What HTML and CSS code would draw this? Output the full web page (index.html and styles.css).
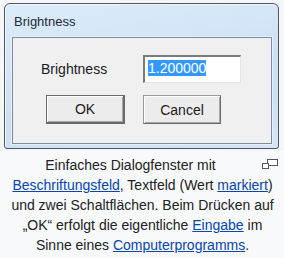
FILE: index.html
```html
<!DOCTYPE html>
<html lang="de">
<head>
    <meta charset="UTF-8">
    <title>Dialogfenster</title>
    <link rel="stylesheet" href="styles.css">
</head>
<body>
    <div class="thumb">
        <div class="shot">
            <div class="window">
                <div class="titlebar">Brightness</div>
                <div class="client">
                    <div class="field-row">
                        <span class="label">Brightness</span>
                        <div class="textbox"><span class="selected">1.200000</span></div>
                    </div>
                    <div class="button-row">
                        <div class="button default">OK</div>
                        <div class="button">Cancel</div>
                    </div>
                </div>
            </div>
        </div>
        <div class="caption">
            <span class="magnify">
                <svg width="16" height="10" viewBox="0 0 16 10">
                    <rect x="5.5" y="0.5" width="10" height="6" fill="#fff" stroke="#54595d"/>
                    <rect x="0.5" y="4.5" width="6" height="5" fill="#fff" stroke="#54595d"/>
                </svg>
            </span>
            Einfaches Dialogfenster mit <a href="#">Beschriftungsfeld</a>, Textfeld (Wert <a href="#">markiert</a>) und zwei Schaltflächen. Beim Drücken auf „OK“ erfolgt die eigentliche <a href="#">Eingabe</a> im Sinne eines <a href="#">Computerprogramms</a>.
        </div>
    </div>
</body>
</html>
```

FILE: styles.css
```css
body {
    margin: 0;
    background-color: #f8f9fa;
    font-family: 'Liberation Sans', Arial, sans-serif;
}
.thumb {
    width: 284px;
    height: 258px;
    overflow: hidden;
}
.shot {
    padding: 3px 0 0 4px;
    height: 148px;
    background-color: #f4f6f8;
}
.window {
    width: 275px;
    height: 146px;
    box-sizing: border-box;
    border: 1px solid #4f565e;
    border-radius: 6px 6px 3px 3px;
    background: linear-gradient(170deg, #dcebf9 0%, #cbe0f5 60%, #d3e5f7 100%);
    box-shadow: inset 1px 1px #f2f7fc;
    padding: 0 6px 4px 7px;
    display: flex;
    flex-direction: column;
}
.titlebar {
    height: 33px;
    font-size: 13px;
    color: #1e2a38;
    padding: 10px 0 0 2px;
    box-sizing: border-box;
}
.client {
    flex: 1;
    border: 1px solid #7f8c99;
    box-shadow: 0 0 0 1px #e6f0fa;
    background-color: #f0f0f0;
    padding: 17px 0 0 28px;
}
.field-row {
    display: flex;
    align-items: center;
    height: 28px;
}
.label {
    width: 102px;
    font-size: 14px;
    color: #1a1a1a;
}
.textbox {
    width: 98px;
    height: 28px;
    box-sizing: border-box;
    background-color: #fff;
    border-top: 2px solid #7a7a7a;
    border-left: 2px solid #7a7a7a;
    border-right: 1px solid #e4e4e4;
    border-bottom: 1px solid #e4e4e4;
    padding: 3px 0 0 3px;
    font-size: 14px;
}
.selected {
    background-color: #3399ff;
    color: #fff;
}
.button-row {
    display: flex;
    gap: 18px;
    margin: 12px 0 0 5px;
}
.button {
    width: 78px;
    height: 29px;
    box-sizing: border-box;
    border: 1px solid #9a9a9a;
    border-right-color: #6a6a6a;
    border-bottom-color: #6a6a6a;
    box-shadow: inset 1px 1px #fff, inset -1px -1px #a8a8a8;
    background-color: #ececec;
    font-size: 14px;
    color: #1a1a1a;
    display: flex;
    align-items: center;
    justify-content: center;
}
.button.default {
    width: 79px;
    border: 2px solid #6a6a6a;
    border-top-width: 1px;
    border-left-width: 1px;
}
.caption {
    padding: 4px 4px 0 5px;
    font-size: 14px;
    line-height: 20px;
    color: #202122;
    text-align: center;
}
.caption a {
    color: #0645ad;
    text-decoration: underline;
}
.magnify {
    float: right;
    margin: 4px 2px 0 6px;
    height: 10px;
    line-height: 0;
}
```
